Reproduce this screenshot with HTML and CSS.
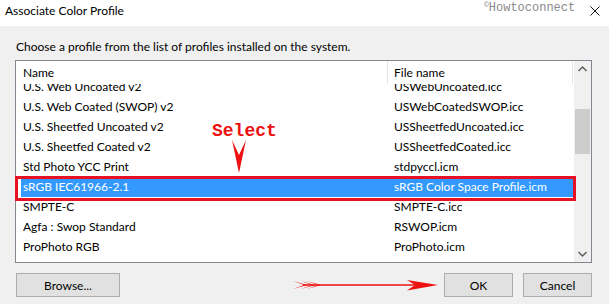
FILE: index.html
```html
<!DOCTYPE html>
<html lang="en">

<head>
    <meta charset="UTF-8">
    <title>Associate Color Profile</title>
    <link rel="stylesheet" href="styles.css">
</head>

<body>
    <div class="dialog">
        <!-- Title bar -->
        <div class="titlebar">
            <span class="title">Associate Color Profile</span>
            <span class="watermark"><sup>&copy;</sup>Howtoconnect</span>
            <svg class="close" width="10" height="10" viewBox="0 0 10 10">
                <path d="M0.5 0.5 L9.5 9.5 M9.5 0.5 L0.5 9.5" stroke="#111" stroke-width="1" fill="none" />
            </svg>
        </div>

        <div class="content">
            <p class="hint">Choose a profile from the list of profiles installed on the system.</p>

            <div class="listbox">
                <div class="list">
                    <div class="list-header">
                        <div class="col-head col-name">Name</div>
                        <div class="col-head col-file">File name</div>
                    </div>
                    <div class="rows">
                        <div class="rows-inner">
                            <div class="row"><span>U.S. Web Uncoated v2</span><span>USWebUncoated.icc</span></div>
                            <div class="row"><span>U.S. Web Coated (SWOP) v2</span><span>USWebCoatedSWOP.icc</span></div>
                            <div class="row"><span>U.S. Sheetfed Uncoated v2</span><span>USSheetfedUncoated.icc</span></div>
                            <div class="row"><span>U.S. Sheetfed Coated v2</span><span>USSheetfedCoated.icc</span></div>
                            <div class="row"><span>Std Photo YCC Print</span><span>stdpyccl.icm</span></div>
                            <div class="row selected"><span>sRGB IEC61966-2.1</span><span>sRGB Color Space Profile.icm</span></div>
                            <div class="row"><span>SMPTE-C</span><span>SMPTE-C.icc</span></div>
                            <div class="row"><span>Agfa : Swop Standard</span><span>RSWOP.icm</span></div>
                            <div class="row"><span>ProPhoto RGB</span><span>ProPhoto.icm</span></div>
                        </div>
                    </div>
                </div>

                <div class="scrollbar">
                    <svg class="arrow" width="17" height="17" viewBox="0 0 17 17">
                        <path d="M4.5 10 L8.5 6 L12.5 10" stroke="#606060" stroke-width="1.5" fill="none" />
                    </svg>
                    <div class="track">
                        <div class="thumb"></div>
                    </div>
                    <svg class="arrow" width="17" height="17" viewBox="0 0 17 17">
                        <path d="M4.5 7 L8.5 11 L12.5 7" stroke="#606060" stroke-width="1.5" fill="none" />
                    </svg>
                </div>
            </div>

            <div class="buttons">
                <button class="btn btn-browse">Browse...</button>
                <svg class="pointer" width="146" height="14" viewBox="0 0 146 14">
                    <path d="M0 3 L14 7 L0 11 L11 7 Z M8 3 L22 7 L8 11 L19 7 Z M14 3 L28 7 L14 11 L25 7 Z" fill="#ee1111" />
                    <line x1="10" y1="7" x2="122" y2="7" stroke="#ee1111" stroke-width="1.5" />
                    <path d="M114 2 L145 7 L114 12.5 L122 7 Z" fill="#ee1111" />
                </svg>
                <button class="btn">OK</button>
                <button class="btn">Cancel</button>
            </div>
        </div>

        <!-- annotations drawn over the list -->
        <div class="mark-box"></div>
        <span class="mark-label">Select</span>
        <svg class="mark-arrow" width="14" height="33" viewBox="0 0 14 33">
            <path d="M0 0 L7 15 L14 0 L7 33 Z" fill="#ee1111" />
        </svg>
    </div>
</body>

</html>
```
FILE: styles.css
```css
* {
    box-sizing: border-box;
}

body {
    margin: 0;
    font-family: 'Lato', sans-serif;
    font-size: 12px;
    color: #000;
    background-color: #f0f0f0;
}

.dialog {
    position: relative;
    width: 609px;
    height: 304px;
    overflow: hidden;
    background-color: #f0f0f0;
}

.titlebar {
    display: flex;
    align-items: flex-start;
    height: 26px;
    padding: 3px 9px 0 5px;
    background-color: #ffffff;
    line-height: 16px;
}

.title {
    flex: 1;
}

.watermark {
    position: absolute;
    top: -3px;
    left: 484px;
    font-family: 'Liberation Mono', monospace;
    font-size: 12px;
    color: #8a8a8a;
}

.watermark sup {
    font-size: 8px;
    vertical-align: 4px;
}

.close {
    margin-top: 3px;
}

.content {
    padding: 0 17px 0 15px;
}

.hint {
    margin: 13px 0 5px 1px;
    line-height: 16px;
}

.listbox {
    display: grid;
    grid-template-columns: 1fr 17px;
    height: 203px;
    border: 1px solid #828790;
    background-color: #ffffff;
}

.list {
    display: flex;
    flex-direction: column;
    overflow: hidden;
}

.list-header {
    display: flex;
    height: 23px;
    flex-shrink: 0;
}

.col-head {
    padding-top: 4px;
    line-height: 16px;
    border-right: 1px solid #e5e5e5;
}

.col-name {
    width: 372px;
    padding-left: 7px;
}

.col-file {
    width: 185px;
    padding-left: 6px;
}

.rows {
    flex: 1;
    overflow: hidden;
}

.rows-inner {
    margin-top: -7px;
}

.row {
    display: grid;
    grid-template-columns: 367px 1fr;
    height: 20px;
    margin: 0 1px 0 5px;
    line-height: 20px;
    white-space: nowrap;
}

.row span:first-child {
    padding-left: 2px;
}

.row span:last-child {
    padding-left: 6px;
}

.row.selected {
    background-color: #3399ff;
    color: #ffffff;
}

.scrollbar {
    display: flex;
    flex-direction: column;
    background-color: #f0f0f0;
}

.arrow {
    display: block;
    flex-shrink: 0;
}

.track {
    flex: 1;
    padding-top: 31px;
}

.thumb {
    height: 45px;
    margin: 0 1px;
    background-color: #cdcdcd;
}

.buttons {
    display: flex;
    align-items: center;
    margin-top: 10px;
    margin-left: 1px;
}

.btn {
    height: 24px;
    width: 69px;
    padding: 0;
    border: 1px solid #adadad;
    background-color: #e1e1e1;
    font-family: 'Lato', sans-serif;
    font-size: 12px;
    color: #000;
}

.btn-browse {
    width: 104px;
}

.pointer {
    margin-left: auto;
    margin-right: 5px;
}

.btn + .btn {
    margin-left: 10px;
}

.mark-box {
    position: absolute;
    left: 15px;
    top: 176px;
    width: 561px;
    height: 25px;
    border: 3px solid #e81123;
}

.mark-label {
    position: absolute;
    left: 212px;
    top: 119px;
    font-family: 'Liberation Mono', monospace;
    font-weight: bold;
    font-size: 18px;
    line-height: 24px;
    color: #ee1111;
}

.mark-arrow {
    position: absolute;
    left: 232px;
    top: 140px;
}
```
